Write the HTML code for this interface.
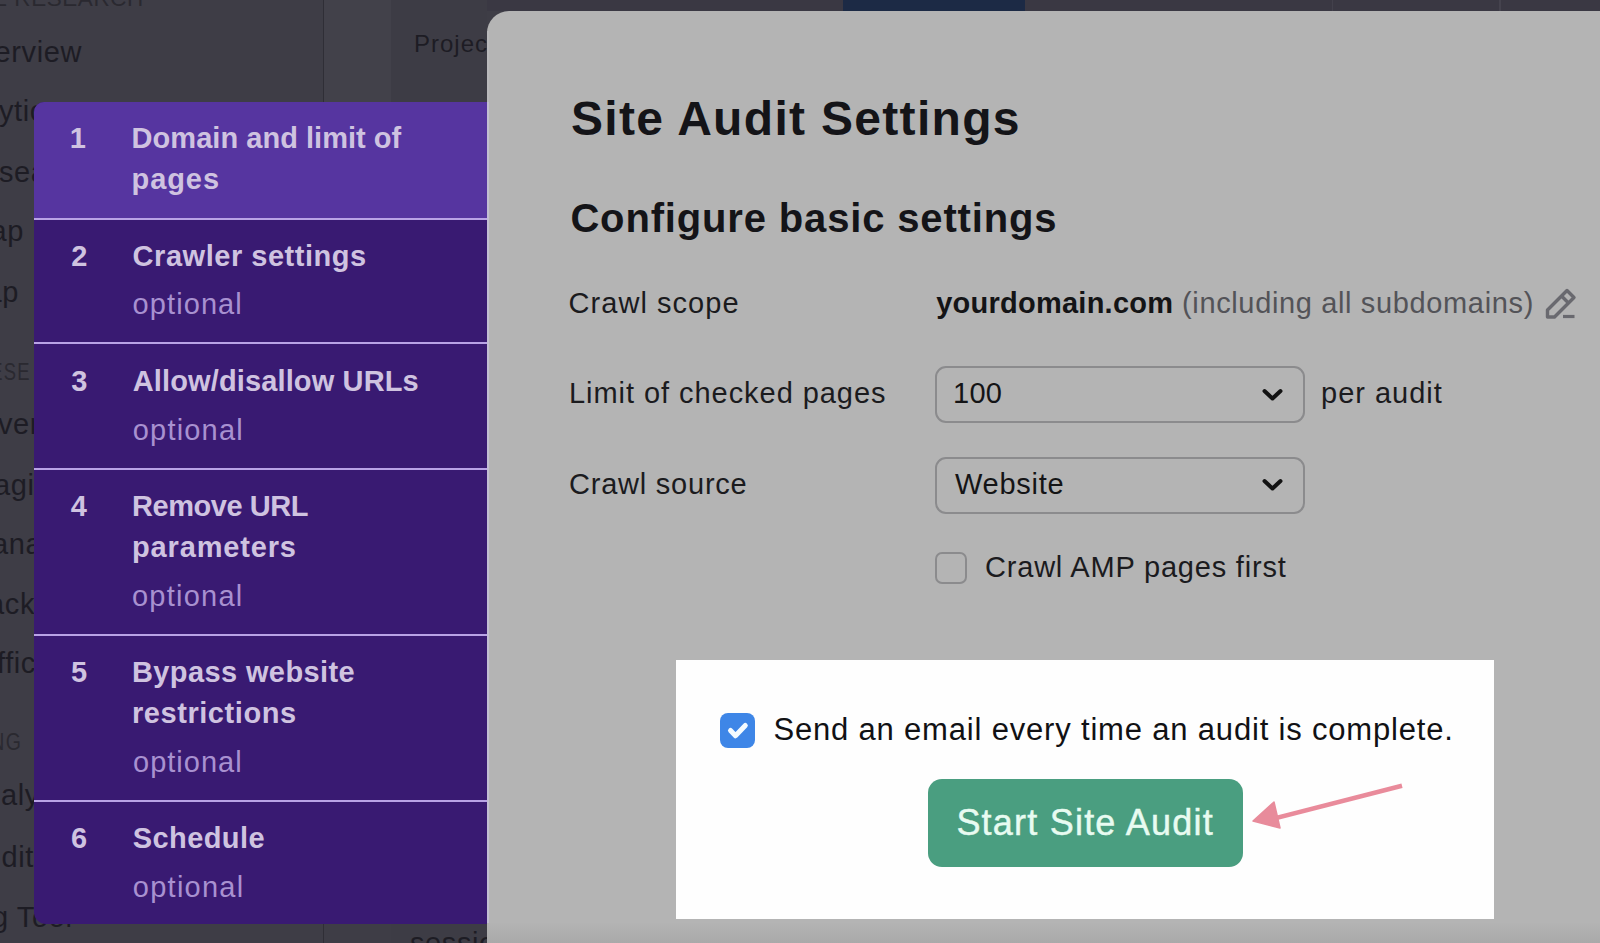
<!DOCTYPE html>
<html><head><meta charset="utf-8">
<style>
*{margin:0;padding:0;box-sizing:border-box}
html,body{width:1600px;height:943px;overflow:hidden;background:#3e3d46;font-family:"Liberation Sans",sans-serif}
.a{position:absolute}
.t{position:absolute;white-space:nowrap}
.bgt{position:absolute;color:#1d1c24;font-size:29px;line-height:29px;letter-spacing:0.6px;white-space:nowrap}
.sec{color:#54535b;font-size:22px;line-height:22px;letter-spacing:1.5px}
.sec2{color:#2a2930;font-size:25px;line-height:25px;letter-spacing:0.5px}
.div{position:absolute;left:34px;width:453px;height:2px;background:#b9a3e6}
.sel{position:absolute;left:935px;width:370px;height:57px;border:2px solid #8b8b8d;border-radius:11px}
</style></head>
<body>
<!-- background app -->
<div class="a" style="left:487px;top:0;width:1113px;height:11px;background:#3a3843"></div>
<div class="a" style="left:843px;top:0;width:182px;height:11px;background:#1c2a45"></div>
<div class="a" style="left:1499px;top:0;width:2px;height:11px;background:#45434e"></div>
<div class="a" style="left:1332px;top:0;width:1px;height:11px;background:#43414c"></div>
<div class="a" style="left:323px;top:0;width:1px;height:943px;background:#2f2e36"></div>
<div class="a" style="left:324px;top:0;width:67px;height:102px;background:#42414a"></div>
<div class="a" style="left:391px;top:0;width:96px;height:943px;background:#3d3c45"></div>
<div class="bgt" style="left:414px;top:32px;font-size:24px;line-height:24px;letter-spacing:1px">Project</div>
<div class="bgt sec2" style="left:-8px;top:-12.5px;letter-spacing:0.55px;font-size:22.5px;line-height:22.5px">E RESEARCH</div>
<div class="bgt" style="right:1518px;top:38.3px">Overview</div>
<div class="bgt" style="left:-1px;top:96.7px">ytics</div>
<div class="bgt" style="left:-1px;top:157.9px">search</div>
<div class="bgt" style="right:1576px;top:216.9px">Map</div>
<div class="bgt" style="right:1581px;top:278.3px">Gap</div>
<div class="bgt sec2" style="right:1569px;top:360.5px;font-size:23px;line-height:23px;letter-spacing:1.5px;transform:scaleX(0.8);transform-origin:100% 50%">RESE</div>
<div class="bgt" style="left:-2px;top:410.4px">verview</div>
<div class="bgt" style="left:-6px;top:470.7px">agic</div>
<div class="bgt" style="left:-8px;top:530px">anager</div>
<div class="bgt" style="right:1565px;top:589.5px">Track</div>
<div class="bgt" style="left:-3px;top:649.3px">ffic</div>
<div class="bgt sec2" style="right:1578px;top:731px;font-size:23px;line-height:23px;letter-spacing:1.5px;transform:scaleX(0.85);transform-origin:100% 50%">KING</div>
<div class="bgt" style="left:1px;top:781.2px">alytics</div>
<div class="bgt" style="right:1566px;top:842.5px">Audit</div>
<div class="bgt" style="left:-8px;top:903px">g Tool</div>
<div class="bgt" style="left:410px;top:929px">session</div>

<!-- modal -->
<div class="a" style="left:487px;top:11px;width:1113px;height:932px;background:#b4b4b4;border-top-left-radius:22px;overflow:hidden">
  <div class="a" style="left:0;top:91px;width:2px;height:822px;background:#c2bed2"></div><div class="a" style="left:0;top:20px;width:2px;height:71px;background:#b9b9bb"></div>
  <div class="a" style="left:0;top:912px;width:1113px;height:20px;background:linear-gradient(#b3b3b3,#a9a9a9)"></div>
</div>
<!-- pencil icon -->
<svg class="a" style="left:1544px;top:287px" width="34" height="33" viewBox="0 0 34 33">
  <g fill="none" stroke="#69696f" stroke-width="3.4" stroke-linejoin="round">
    <path d="M3.5 30 L3.5 23 L23 3.5 L30 10.5 L10.5 30 Z"/>
    <path d="M17.5 9 L24.5 16"/>
  </g>
  <path d="M19 29.5 H30.5" stroke="#69696f" stroke-width="3.2"/>
</svg>
<!-- selects -->
<div class="sel" style="top:366px"></div>
<svg class="a" style="left:1259px;top:384px" width="26" height="20" viewBox="0 0 26 20"><path d="M5.5 7 L13.5 14.5 L21.5 7" fill="none" stroke="#121212" stroke-width="4" stroke-linecap="round" stroke-linejoin="round"/></svg>
<div class="sel" style="top:457px"></div>
<svg class="a" style="left:1259px;top:474px" width="26" height="20" viewBox="0 0 26 20"><path d="M5.5 7 L13.5 14.5 L21.5 7" fill="none" stroke="#121212" stroke-width="4" stroke-linecap="round" stroke-linejoin="round"/></svg>
<!-- amp checkbox -->
<div class="a" style="left:935px;top:552px;width:32px;height:32px;border:2px solid #8b8b8d;border-radius:7px"></div>
<!-- white box -->
<div class="a" style="left:676px;top:660px;width:818px;height:259px;background:#fefefe"></div>
<div class="a" style="left:720px;top:713px;width:35px;height:35px;background:#3e86e7;border-radius:8px">
  <svg width="35" height="35" viewBox="0 0 35 35"><path d="M10.5 17.5 L15.5 22.8 L25.3 12.5" fill="none" stroke="#f4fbff" stroke-width="5" stroke-linecap="round" stroke-linejoin="round"/></svg>
</div>
<div class="a" style="left:928px;top:779px;width:315px;height:88px;background:#4a9e80;border-radius:14px"></div>
<svg class="a" style="left:1245px;top:775px" width="165" height="60" viewBox="0 0 165 60">
  <path d="M157 10.8 L25 44.5" stroke="#e98b9b" stroke-width="4.6" stroke-linecap="butt"/>
  <path d="M8 46 L29 27 L35 53 Z" fill="#e88b9b" stroke="#e88b9b" stroke-width="1.5" stroke-linejoin="round"/>
</svg>

<!-- steps sidebar -->
<div class="a" style="left:34px;top:102px;width:453px;height:822px;background:#391a72;border-top-left-radius:10px;border-bottom-left-radius:12px;overflow:hidden">
  <div class="a" style="left:0;top:0;width:453px;height:116px;background:#5635a0"></div>
</div>
<div class="div" style="top:218px"></div>
<div class="div" style="top:342px"></div>
<div class="div" style="top:468px"></div>
<div class="div" style="top:634px"></div>
<div class="div" style="top:800px"></div>

<div class="t" id="t_title" style="left:571.00px;top:95.00px;font-size:48px;line-height:48px;color:#141418;font-weight:bold;letter-spacing:1.311px;">Site Audit Settings</div>
<div class="t" id="t_config" style="left:570.40px;top:197.81px;font-size:40px;line-height:40px;color:#141418;font-weight:bold;letter-spacing:0.843px;">Configure basic settings</div>
<div class="t" id="t_scope" style="left:568.60px;top:289.40px;font-size:29px;line-height:29px;color:#1b1b1e;letter-spacing:1.040px;">Crawl scope</div>
<div class="t" id="t_dom" style="left:936.20px;top:289.21px;font-size:29px;line-height:29px;color:#141416;font-weight:bold;letter-spacing:0.246px;">yourdomain.com</div>
<div class="t" id="t_incl" style="left:1182.00px;top:289.21px;font-size:29px;line-height:29px;color:#535358;letter-spacing:0.640px;">(including all subdomains)</div>
<div class="t" id="t_limit" style="left:569.00px;top:379.40px;font-size:29px;line-height:29px;color:#1b1b1e;letter-spacing:0.948px;">Limit of checked pages</div>
<div class="t" id="t_100" style="left:953.00px;top:379.21px;font-size:29px;line-height:29px;color:#141416;letter-spacing:0.250px;">100</div>
<div class="t" id="t_per" style="left:1321.00px;top:379.40px;font-size:29px;line-height:29px;color:#1b1b1e;letter-spacing:1.000px;">per audit</div>
<div class="t" id="t_src" style="left:569.00px;top:470.01px;font-size:29px;line-height:29px;color:#1b1b1e;letter-spacing:0.773px;">Crawl source</div>
<div class="t" id="t_web" style="left:955.00px;top:469.81px;font-size:29px;line-height:29px;color:#141416;letter-spacing:0.750px;">Website</div>
<div class="t" id="t_amp" style="left:985.00px;top:552.81px;font-size:29px;line-height:29px;color:#1b1b1e;letter-spacing:0.800px;">Crawl AMP pages first</div>
<div class="t" id="t_send" style="left:773.40px;top:713.61px;font-size:31px;line-height:31px;color:#111114;letter-spacing:0.818px;">Send an email every time an audit is complete.</div>
<div class="t" id="t_start" style="left:956.40px;top:805.22px;font-size:36px;line-height:36px;color:#e8fbf1;letter-spacing:1.213px;-webkit-text-stroke:0.45px #e8fbf1;">Start Site Audit</div>
<div class="t" id="n1" style="left:69.80px;top:124.41px;font-size:29px;line-height:29px;color:#cfc3e0;font-weight:bold;">1</div>
<div class="t" id="s1a" style="left:131.60px;top:124.41px;font-size:29px;line-height:29px;color:#cfc3e0;font-weight:bold;letter-spacing:0.033px;">Domain and limit of</div>
<div class="t" id="s1b" style="left:131.60px;top:165.41px;font-size:29px;line-height:29px;color:#cfc3e0;font-weight:bold;letter-spacing:0.900px;">pages</div>
<div class="t" id="n2" style="left:71.20px;top:242.10px;font-size:29px;line-height:29px;color:#cfc3e0;font-weight:bold;">2</div>
<div class="t" id="s2a" style="left:132.60px;top:242.10px;font-size:29px;line-height:29px;color:#cfc3e0;font-weight:bold;letter-spacing:0.533px;">Crawler settings</div>
<div class="t" id="o2" style="left:132.60px;top:290.31px;font-size:29px;line-height:29px;color:#a891d0;letter-spacing:1.086px;">optional</div>
<div class="t" id="n3" style="left:71.20px;top:367.01px;font-size:29px;line-height:29px;color:#cfc3e0;font-weight:bold;">3</div>
<div class="t" id="s3a" style="left:132.80px;top:367.01px;font-size:29px;line-height:29px;color:#cfc3e0;font-weight:bold;letter-spacing:0.128px;">Allow/disallow URLs</div>
<div class="t" id="o3" style="left:132.80px;top:416.11px;font-size:29px;line-height:29px;color:#a891d0;letter-spacing:1.186px;">optional</div>
<div class="t" id="n4" style="left:70.80px;top:492.31px;font-size:29px;line-height:29px;color:#cfc3e0;font-weight:bold;">4</div>
<div class="t" id="s4a" style="left:132.00px;top:492.31px;font-size:29px;line-height:29px;color:#cfc3e0;font-weight:bold;letter-spacing:-0.456px;">Remove URL</div>
<div class="t" id="s4b" style="left:132.00px;top:533.00px;font-size:29px;line-height:29px;color:#cfc3e0;font-weight:bold;letter-spacing:0.844px;">parameters</div>
<div class="t" id="o4" style="left:132.00px;top:582.21px;font-size:29px;line-height:29px;color:#a891d0;letter-spacing:1.229px;">optional</div>
<div class="t" id="n5" style="left:71.00px;top:658.10px;font-size:29px;line-height:29px;color:#cfc3e0;font-weight:bold;">5</div>
<div class="t" id="s5a" style="left:132.00px;top:658.10px;font-size:29px;line-height:29px;color:#cfc3e0;font-weight:bold;letter-spacing:0.385px;">Bypass website</div>
<div class="t" id="s5b" style="left:132.00px;top:698.90px;font-size:29px;line-height:29px;color:#cfc3e0;font-weight:bold;letter-spacing:0.555px;">restrictions</div>
<div class="t" id="o5" style="left:133.00px;top:747.51px;font-size:29px;line-height:29px;color:#a891d0;letter-spacing:1.000px;">optional</div>
<div class="t" id="n6" style="left:71.00px;top:823.70px;font-size:29px;line-height:29px;color:#cfc3e0;font-weight:bold;">6</div>
<div class="t" id="s6a" style="left:132.80px;top:823.70px;font-size:29px;line-height:29px;color:#cfc3e0;font-weight:bold;letter-spacing:0.400px;">Schedule</div>
<div class="t" id="o6" style="left:132.80px;top:872.81px;font-size:29px;line-height:29px;color:#a891d0;letter-spacing:1.257px;">optional</div>
</body></html>
